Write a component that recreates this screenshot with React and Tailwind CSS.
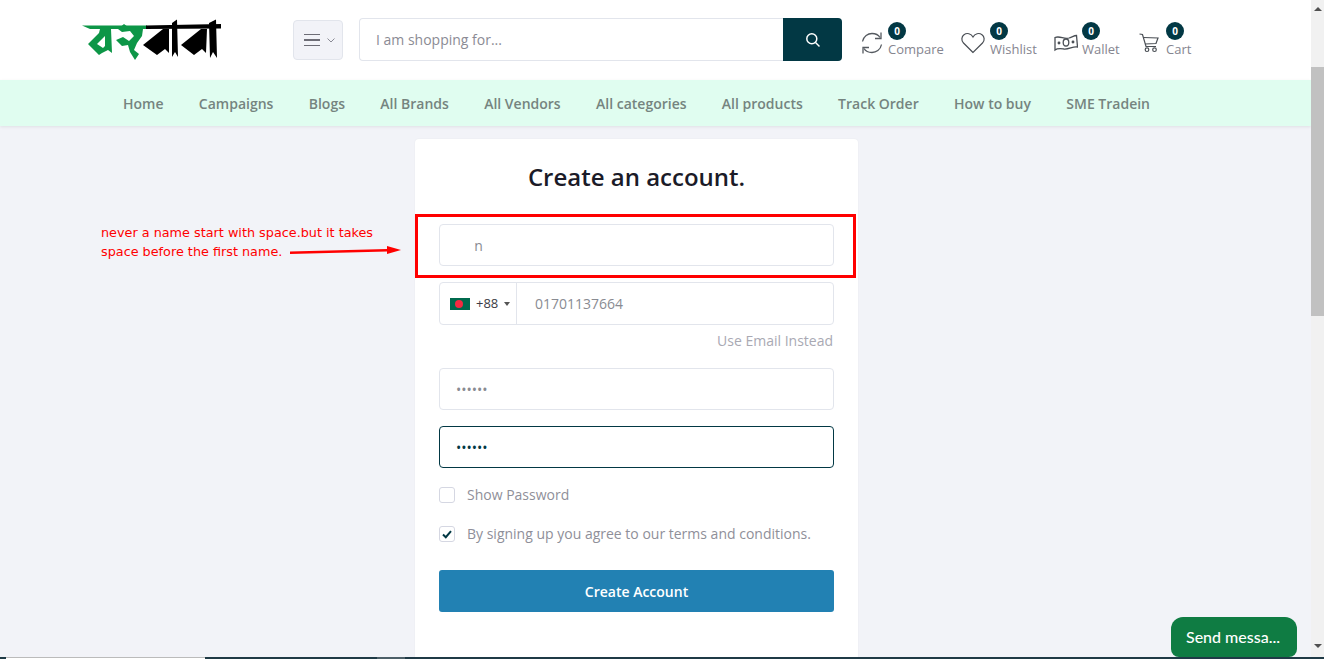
import React from "react";

const Logo = () => (
  <svg width="140" height="42" viewBox="82 19 140 42" aria-label="logo">
    <g fill="#0d9647">
      <path d="M82 25.500 L147 25.500 L147 29 L111 29 L112 53 L108 50 L102 53 L99 55 L88 44 L99 33 L100 29 L90 29 Z M97 44 L103 48 L105 46 L105 36 Z" fillRule="evenodd" />
      <path d="M118 29 L124 24 L128 27 L143 29 L142 36 L137 43 L134 50 L139 54 L135 60 L130 52 L128 45 L122 46 L116 40 L123 37 L129 41 L134 36 L130 31 L122 32 Z" />
    </g>
    <g fill="#000">
      <path d="M146 25.500 L221 24 L221 28.500 L146 29 Z" />
      <path d="M143 45 L163 29 L169 29 L169 53 L165 49 L157 55 Z" />
      <path d="M172 23 L177 19.500 L178 57 L175 52 L172 57 Z" />
      <path d="M181 45 L201 29 L207 29 L206 53 L202 49 L194 55 Z" />
      <path d="M209 23 L216 19.500 L217 58 L213 52 L210 58 Z" />
    </g>
  </svg>
);

const Refresh = () => (
  <svg width="22" height="24" viewBox="0 0 22 24" fill="none" stroke="#555a60" strokeWidth="1.3" className="block">
    <path d="M1.500 10.500 C2.500 5 7 2.500 11 2.500 C14.500 2.500 17.500 4 19 6.500" />
    <path d="M20 1.500 L20 7.500 L14 7.500" />
    <path d="M20.500 13.500 C19.500 19 15 21.500 11 21.500 C7.500 21.500 4.500 20 3 17.500" />
    <path d="M2 22.500 L2 16.500 L8 16.500" />
  </svg>
);
const Heart = () => (
  <svg width="24" height="22" viewBox="0 0 24 22" fill="none" stroke="#4a4f55" strokeWidth="1.2" className="block">
    <path d="M12 20.500 L2.500 11 C0 8.500 0.500 4.500 3 2.700 C6 0.500 10 1.500 12 5 C14 1.500 18 0.500 21 2.700 C23.500 4.500 24 8.500 21.500 11 Z" />
  </svg>
);
const Money = () => (
  <svg width="24" height="18" viewBox="0 0 24 18" fill="none" stroke="#4a4f55" strokeWidth="1.3" className="block">
    <path d="M1 3.500 C6 1.500 10 5.500 15 4 C18 3 20.500 1.500 22.500 1.500 L23.500 13 C19 12 15 15.500 10 15 C6 14.500 3.500 14 1 16 Z" />
    <ellipse cx="12" cy="8.500" rx="2.800" ry="3.500" />
    <circle cx="5" cy="9" r="0.800" fill="#4a4f55" />
    <circle cx="19" cy="8" r="0.800" fill="#4a4f55" />
  </svg>
);
const Cart = () => (
  <svg width="20" height="20" viewBox="0 0 20 20" fill="none" stroke="#4a4f55" strokeWidth="1.2" className="block">
    <path d="M0.500 1 L3.500 1.500 L7 13.500 L17 13.500" />
    <path d="M4.500 4.500 L19 5 L17 10.500 L6 11" />
    <circle cx="8" cy="16.700" r="1.800" />
    <circle cx="15.500" cy="16.700" r="1.800" />
  </svg>
);

const Action = ({ icon, label, colGap, width }) => (
  <div className="flex items-center shrink-0" style={{ width }}>
    <div className="mt-[5px] shrink-0" style={{ width: colGap }}>{icon}</div>
    <div className="flex flex-col items-start">
      <span className="flex h-[18px] w-[18px] items-center justify-center rounded-full bg-[#023844] text-[10px] font-bold leading-none text-white">0</span>
      <span className="text-[13px] leading-[18px] text-[#85858f]">{label}</span>
    </div>
  </div>
);

const navItems = ["Home", "Campaigns", "Blogs", "All Brands", "All Vendors", "All categories", "All products", "Track Order", "How to buy", "SME Tradein"];

const inputCls = "block h-[42px] w-full rounded border bg-white px-4 text-sm outline-none";

export default function App() {
  return (
    <div className="relative flex h-[659px] w-full overflow-hidden bg-[#f2f3f8] font-['Open_Sans',sans-serif]">
      <main className="min-w-0 flex-1">
        <header className="flex h-20 items-center bg-white pl-[82px]">
          <Logo />
          <button className="ml-[71px] flex h-10 w-[50px] items-center justify-center gap-[7px] rounded border border-[#e2e5ec] bg-[#f2f3f8] pl-[3px]">
            <span className="flex w-4 flex-col gap-1">
              <span className="h-[1.5px] bg-[#6d6d76]" />
              <span className="h-[1.5px] bg-[#6d6d76]" />
              <span className="h-[1.5px] bg-[#6d6d76]" />
            </span>
            <svg width="8" height="5" viewBox="0 0 8 5" fill="none" stroke="#8a8a95" strokeWidth="1"><path d="M0.500 0.500 L4 4 L7.500 0.500" /></svg>
          </button>
          <div className="mb-[1px] ml-4 flex h-[43px] w-[483px] shrink-0">
            <div className="flex flex-1 items-center rounded-l border border-r-0 border-[#e2e5ec] pl-4 text-sm text-[#8b8b94]">I am shopping for...</div>
            <button className="flex w-[59px] items-center justify-center rounded-r bg-[#023844]">
              <svg width="16" height="16" viewBox="0 0 16 16" fill="none" stroke="#fff" strokeWidth="1.500"><circle cx="6.800" cy="6.800" r="5" /><path d="M10.500 10.500 L14.500 14.500" /></svg>
            </button>
          </div>
          <div className="ml-[19px] flex h-full items-center">
            <Action icon={<Refresh />} label="Compare" colGap={27} width={100} />
            <Action icon={<Heart />} label="Wishlist" colGap={29} width={93} />
            <Action icon={<Money />} label="Wallet" colGap={28} width={85} />
            <Action icon={<Cart />} label="Cart" colGap={27} width={60} />
          </div>
        </header>
        <nav className="flex h-[46px] items-center gap-[35.33px] bg-[#e0fdf0] pl-[123px] pt-[2px] text-sm font-semibold text-[#75847f] shadow-[0_1px_3px_rgba(0,0,0,0.08)]">
          {navItems.map((n) => <span key={n} className="shrink-0">{n}</span>)}
        </nav>
        <section className="ml-[415px] mt-[13px] h-[600px] w-[443px] rounded-t bg-white px-6 shadow-[0_0_2px_rgba(0,0,0,0.06)]">
          <h1 className="pt-[21px] text-center text-2xl font-semibold leading-[34px] text-[#1b1b28]">Create an account.</h1>
          <form className="mt-[30px]">
            <input readOnly value={"     n"} className={`${inputCls} border-[#e2e5ec] text-[#898b92]`} />
            <div className="mt-4 flex h-[43px] rounded border border-[#e2e5ec] text-sm">
              <div className="flex w-[77px] shrink-0 items-center border-r border-[#e2e5ec] pl-[10px] text-[13px] text-[#3a3a44]">
                <svg width="20" height="12" viewBox="0 0 20 12" className="shrink-0"><rect width="20" height="12" fill="#006a4e" /><circle cx="9" cy="6" r="4" fill="#f42a41" /></svg>
                <span className="ml-[6px]">+88</span>
                <span className="ml-[6px] h-0 w-0 border-x-[3px] border-t-[4px] border-x-transparent border-t-[#555]" />
              </div>
              <div className="flex flex-1 items-center pl-[18px] text-[#898b92]">01701137664</div>
            </div>
            <div className="mt-[6px] text-right text-sm leading-[20px] text-[#a9a9b3]"><span className="pr-px">Use Email Instead</span></div>
            <input readOnly type="password" value="123456" className={`${inputCls} mt-[17px] border-[#e2e5ec] text-[#898b92]`} />
            <input readOnly type="password" value="123456" className={`${inputCls} mt-4 border-[#023844] text-[#023844]`} />
            <label className="mt-[17px] flex h-5 items-center gap-3 text-sm text-[#8f8f99]">
              <span className="h-4 w-4 rounded-[3px] border border-[#d5d7e2] bg-white" />
              Show Password
            </label>
            <label className="mt-[19px] flex h-5 items-center gap-3 text-sm text-[#8f8f99]">
              <span className="flex h-4 w-4 items-center justify-center rounded-[3px] border border-[#d5d7e2] bg-white">
                <svg width="10" height="9" viewBox="0 0 10 9" fill="none" stroke="#023844" strokeWidth="2"><path d="M1 4.500 L3.800 7.200 L9 1.200" /></svg>
              </span>
              By signing up you agree to our terms and conditions.
            </label>
            <button type="button" className="mt-[26px] block h-[42px] w-full rounded-[3px] bg-[#2281b3] pt-[2px] text-sm font-semibold text-white">Create Account</button>
          </form>
        </section>
      </main>

      <div className="flex w-[13px] shrink-0 flex-col items-center bg-[#f1f1f1]">
        <span className="mt-[7px] h-0 w-0 border-x-[4px] border-b-[4px] border-x-transparent border-b-[#505050]" />
        <span className="mt-[56px] h-[249px] w-full bg-[#c1c1c1]" />
        <span className="mt-[328px] h-0 w-0 border-x-[4px] border-t-[4px] border-x-transparent border-t-[#505050]" />
      </div>

      {/* Annotation drawn over the page */}
      <div className="absolute left-[101px] top-[223px] whitespace-nowrap font-['DejaVu_Sans',sans-serif] text-[12.8px] leading-[19px] text-[#ff0000]">
        never a name start with space.but it takes<br />space before the first name.
      </div>
      <svg className="absolute left-[290px] top-[245px]" width="112" height="12" viewBox="0 0 112 12">
        <path d="M0 6.500 L97 4 L97 1 L111 5 L97 9 L97 6.500 L0 9 Z" fill="#ff0000" />
      </svg>
      <div className="pointer-events-none absolute left-[415px] top-[214px] h-[64px] w-[441px] border-[3px] border-[#ff0000]" />

      <button className="absolute left-[1171px] top-[617px] h-10 w-[126px] rounded-t-xl rounded-b-lg bg-[#0f7c43] pr-[2px] font-['Lato',sans-serif] text-base font-medium text-white">Send messa...</button>

      <div className="absolute inset-x-0 bottom-0 flex h-[2px] bg-[#1f3a46]">
        <span className="ml-[6px] w-[199px] border-t border-[#bbb] bg-white" />
        <span className="ml-[172px] w-[28px] bg-[#4d5f68]" />
      </div>
    </div>
  );
}
